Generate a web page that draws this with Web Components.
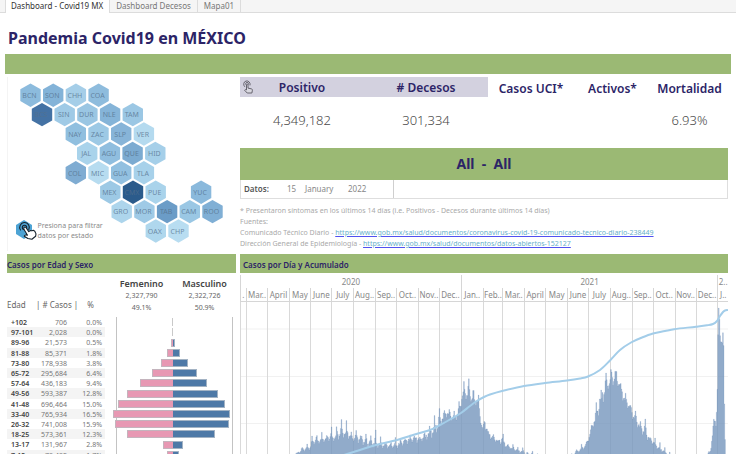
<!DOCTYPE html>
<html lang="es">
<head>
<meta charset="utf-8">
<title>Pandemia Covid19 en MÉXICO</title>
<style>
  body { margin: 0; overflow: hidden; background: #fff; font-family: "Noto Sans", "Open Sans", sans-serif; font-size: 8px; color: #666;
    --green: #9bb974; --navy: #2c2467; --line: #d6d6d6; }
</style>
</head>
<body>
<covid-dashboard></covid-dashboard>
<script>
const define = (name, html, render) => customElements.define(name, class extends HTMLElement {
  connectedCallback() {
    if (this.shadowRoot) return;
    this.attachShadow({ mode: 'open' }).innerHTML = html;
    if (render) render(this.shadowRoot, this);
  }
});

define('sheet-tabs', `
<style>
  :host { display: block; background: #f5f5f5; border-bottom: 1px solid #dcdcdc; height: 12px; padding-left: 5px; }
  nav { display: flex; height: 13px; }
  button { font: inherit; font-size: 8px; line-height: 12px; padding: 0 6px 1px; margin: 0; border: 0; border-right: 1px solid #dcdcdc; background: none; color: #777; white-space: nowrap; }
  button[aria-selected=true] { background: #fff; color: #333; padding-left: 5px; border-left: 1px solid #dcdcdc; }
</style>
<nav role="tablist">
  <button role="tab" aria-selected="true">Dashboard - Covid19 MX</button>
  <button role="tab" aria-selected="false">Dashboard Decesos</button>
  <button role="tab" aria-selected="false">Mapa01</button>
</nav>`);

define('section-band', `
<style>
  :host { display: block; background: var(--green); color: var(--navy); font-size: 8px; font-weight: 600; line-height: 21px; height: 19px; }
  h2 { font: inherit; line-height: inherit; margin: 0; }
  :host([inset]) { padding-left: 3px; }
</style>
<h2><slot></slot></h2>`);

define('state-map', `
<style>
  :host { display: block; }
  svg { display: block; width: 100%; }
  text { font-size: 7px; fill: #54708c; fill-opacity: .75; text-anchor: middle; }
  .hint { font-size: 7px; fill: #8a8a8a; fill-opacity: 1; text-anchor: start; }
</style>
<svg viewBox="5 77 231 174" role="img" aria-label="Mapa de estados">
  <path d="M7.500 77V251" stroke="#f4f4f4"/>
  <g id="cells"></g>
  <polygon points="24,220 32,225 32,234 24,239 16,234 16,225" fill="#4da3d4"/>
  <g fill="none" stroke="#16222c" stroke-width="1.100" stroke-linecap="round" stroke-linejoin="round">
    <circle cx="24.500" cy="227.500" r="2.200"/>
    <path d="M20.500 230a4.800 4.800 0 1 1 8.300-.5"/>
    <path fill="#fff" d="M24 227.500q1-1 1.900 0l2.900 4.100 1.500-1 1.700.2 1.300-.5 1.500.9 1.200 2.700-.4 2.400-3.700 2.900-4-.7-3.600-2.300q.2-1.400 1.900-1.200l1.300.2-3.300-5.500q-.8-1.300-.2-2.200z"/>
  </g>
  <text class="hint" x="37.500" y="228">Presiona para filtrar</text>
  <text class="hint" x="37.500" y="238">datos por estado</text>
</svg>`, root => {
  const rows = [
    [30.5, 'BCN #8cbbdd,SON #83b3d8,CHH #a5cee8,COA #8ebcdd'],
    [42, 'BCS #4472a4,SIN #9fcae6,DUR #9ac6e3,NLE #85b4d8,TAM #9bc7e4'],
    [75.8, 'NAY #90bfdf,ZAC #9dc9e5,SLP #87b4d8,VER #b4daef'],
    [87.2, 'JAL #a9d3eb,AGU #90bedf,QUE #7cabd1,HID #a5cfe9'],
    [75.8, 'COL #7facd2,MIC #b7dcf0,GUA #92c0e0,TLA #a7d1ea'],
    [110.3, 'MEX #9dc9e5,CMX #2b5b8b,PUE #a9d3eb,,YUC #8ab9dc'],
    [121.7, 'GRO #add5ec,MOR #9fcae6,TAB #6b9cc7,CAM #9ac7e4,ROO #80afd5'],
    [155.8, 'OAX #afd7ed,CHP #b8ddf1']];
  root.getElementById('cells').innerHTML = rows.map(([x0, list], r) => list.split(',').map((s, i) => {
    if (!s) return '';
    const [name, fill] = s.split(' '), x = x0 + i * 22.7, y = 95.2 + r * 19.4;
    return `<path fill="${fill}" d="M${x} ${y - 11.7}l10.200 5.800v11.700l-10.200 5.900l-10.200-5.900v-11.700z"/><text x="${x - 1}" y="${y + 2.8}">${name}</text>`;
  }).join('')).join('');
});

define('kpi-tile', `
<style>
  :host { display: block; text-align: center; }
  h3 { position: relative; margin: 0; font-size: 12px; line-height: 22px; height: 20px; font-weight: 600; color: var(--navy); }
  :host([active]) h3 { background: #d3d1df; }
  :host(:not([active])) h3 { line-height: 24px; }
  p { margin: 12px 0 0; font-size: 13px; line-height: 22px; font-weight: 300; height: 39px; color: #484848; }
  ::slotted(svg) { position: absolute; left: 2px; top: 3px; width: 12px; height: 14px; }
</style>
<h3><slot name="icon"></slot><slot name="label"></slot></h3><p><slot></slot></p>`);

define('source-notes', `
<style>
  :host { display: block; padding-top: 6px; font-size: 7px; line-height: 11px; color: #a9a9a9; white-space: nowrap; }
  p { margin: 0; }
  a { color: #67b0ca; text-decoration: underline #5151f0; text-underline-offset: 1px; }
</style>
<p>* Presentaron síntomas en los últimos 14 días (i.e. Positivos - Decesos durante últimos 14 días)</p>
<p>Fuentes:</p>
<p>Comunicado Técnico Diario - <a href="https://www.gob.mx/salud/documentos/coronavirus-covid-19-comunicado-tecnico-diario-238449">https://www.gob.mx/salud/documentos/coronavirus-covid-19-comunicado-tecnico-diario-238449</a></p>
<p>Dirección General de Epidemiología - <a href="https://www.gob.mx/salud/documentos/datos-abiertos-152127">https://www.gob.mx/salud/documentos/datos-abiertos-152127</a></p>`);

define('date-row', `
<style>
  :host { display: grid; grid-template-columns: 154fr 334fr; border: 1px solid #dedede; border-top: 0; height: 18px; line-height: 18px; }
  div { display: flex; border-right: 1px solid #cfcfcf; padding-left: 3px; color: #888; }
  b { width: 43px; font-weight: 600; color: #555; }
  .d { width: 18px; } .m { width: 43px; }
</style>
<div><b>Datos:</b><span class="d">15</span><span class="m">January</span><span>2022</span></div>`);

define('age-pyramid', `
<style>
  :host { display: block; }
  table { width: 100%; border-collapse: collapse; table-layout: fixed; line-height: 10px; }
  th, td { padding: 0; }
  thead th { box-sizing: border-box; height: 44px; padding-bottom: 7px; vertical-align: bottom; font-weight: 400; text-align: left; white-space: nowrap; }
  thead th.c { text-align: center; }
  thead th.sex { text-align: center; line-height: 12px; padding: 5px 0 0; vertical-align: top; font-size: 7px; }
  thead th.sex b { display: block; font-size: 9px; font-weight: 600; color: #444; }
  thead th.sex span { display: block; line-height: 11px; }
  tbody { line-height: 9px; font-size: 7px; }
  tbody th { font-weight: 600; text-align: left; padding-left: 4px; color: #444; }
  tbody td { text-align: right; color: #777; padding-right: 3px; }
  tbody td.n { padding-right: 9px; }
  tbody tr:nth-child(even) :is(th, .n, .p) { background: #f4f4f4; }
  tbody td.bar { vertical-align: middle; padding: 0; }
  .bar i { display: block; height: 8px; box-sizing: border-box; border: 1px solid #c4b4bd; width: var(--w); }
  .f { background: linear-gradient(#c3c3c3, #c3c3c3) 6px 0 / 1px 100% no-repeat; }
  .m { background: linear-gradient(#c3c3c3, #c3c3c3) 59px 0 / 1px 100% no-repeat; }
  .f i { background: #e798b3; margin-left: auto; border-right: 0; }
  .m i { background: #4e79a7; border-color: #a3b3c4; border-left: 0; }
  .f.none i { background: #c9c9c9; border: 0; }
  .m.none i { visibility: hidden; }
</style>
<table>
  <colgroup><col style="width:29px"><col style="width:40px"><col style="width:29px"><col style="width:5px"><col><col></colgroup>
  <thead><tr><th>Edad</th><th class="c">| # Casos |</th><th class="c">%</th><td></td><th class="sex"><b>Femenino</b>2,327,790<span>49.1%</span></th><th class="sex"><b>Masculino</b>2,322,726<span>50.9%</span></th></tr></thead>
  <tbody></tbody>
</table>`, root => {
  const data = [['+102', '706', '0.0', 1, 1], ['97-101', '2,028', '0.0', 1, 1], ['89-96', '21,573', '0.5', 2, 2], ['81-88', '85,371', '1.8', 6, 7],
    ['73-80', '178,938', '3.8', 12, 15], ['65-72', '295,684', '6.4', 21, 24], ['57-64', '436,183', '9.4', 33, 34], ['49-56', '593,387', '12.8', 46, 45],
    ['41-48', '696,464', '15.0', 55, 52], ['33-40', '765,934', '16.5', 60, 57], ['26-32', '741,008', '15.9', 58, 56], ['18-25', '573,361', '12.3', 46, 42],
    ['13-17', '131,967', '2.8', 10, 10], ['7-12', '79,492', '1.7', 6, 6]];
  root.querySelector('tbody').innerHTML = data.map(([a, n, p, f, m], i) => {
    const none = f < 2 ? ' none' : '';
    return `<tr style="height:${i % 5 === 2 ? 11 : 10}px"><th scope="row">${a}</th><td class="n">${n}</td><td class="p">${p}%</td><td></td><td class="bar f${none}"><i style="--w:${f}px"></i></td><td class="bar m${none}"><i style="--w:${m}px"></i></td></tr>`;
  }).join('');
});

define('daily-chart', `
<style>
  :host { display: block; padding-top: 2px; color: #888; }
  .years, .months { display: grid; text-align: center; }
  .years span, .months span { border-left: 1px solid var(--line); overflow: hidden; min-width: 0; white-space: nowrap; font-size: 8px; line-height: 14px; height: 13px; }
  .months { border-bottom: 1px solid var(--line); }
  svg { display: block; width: 100%; height: 154px; }
</style>
<div class="years"></div><div class="months"></div>
<svg viewBox="240 302 488 154" preserveAspectRatio="none" role="img" aria-label="Casos por día y acumulado"></svg>`, root => {
  const days = [8, 31, 30, 31, 30, 31, 31, 30, 31, 30, 31, 31, 28, 31, 30, 31, 30, 31, 31, 30, 31, 30, 31, 15];
  const names = ['.', 'Mar..', 'April', 'May', 'June', 'July', 'Aug..', 'Sep..', 'Oct..', 'Nov..', 'Dec..', 'Jan..', 'Feb..', 'Mar..', 'April', 'May', 'June', 'July', 'Aug..', 'Sep..', 'Oct..', 'Nov..', 'Dec..', 'J..'];
  const total = days.reduce((a, b) => a + b), unit = 488 / total;
  const months = root.querySelector('.months'), years = root.querySelector('.years');
  months.style.gridTemplateColumns = days.map(d => d + 'fr').join(' ');
  months.innerHTML = names.map(n => `<span>${n}</span>`).join('');
  years.style.gridTemplateColumns = '314fr 365fr 15fr';
  years.innerHTML = '<span>2020</span><span>2021</span><span>2..</span>';
  let sum = 0, grid = '';
  for (const d of days) { const x = Math.round(240 + sum * unit) + .5; grid += `M${x} 302V456`; sum += d; }

  /* x, typical level, weekly peak level */
  const env = [[290,460,460],[295,455,452],[303,451,445],[310,449,444],[312,444,434],[320,443,433],[325,441,431],[332,440,427],[339,438,423],[346,436,420],[350,439,431],[359,442,430],[367,446,434],[375,446,432],[385,448,440],[397,447,438],[405,444,434],[410,441,430],[418,442,431],[425,439,430],[432,436,417],[437,430,412],[441,423,406],[447,415,406],[454,422,410],[459,414,400],[461,404,385],[463,396,375],[468,398,381],[472,402,385],[476,404,384],[479,416,395],[481,425,420],[483,434,425],[484,424,410],[488,437,427],[493,440,431],[498,443,436],[502,444,429],[506,447,442],[518,452,447],[525,455,448],[535,456,451],[540,459,456],[565,460,459],[575,454,450],[582,450,444],[587,445,438],[591,430,420],[595,422,405],[600,407,379],[606,391,368],[609,386,380],[611,382,364],[614,384,366],[616,381,364],[620,390,373],[625,407,388],[630,408,402],[632,418,402],[638,427,416],[645,437,420],[650,441,434],[655,447,439],[665,454,449],[675,459,457],[704,460,459],[710,453,447],[713,430,419],[716,424,405],[717,395,360],[718,336,309],[719,325,309],[720,340,334],[722,345,336],[723,330,324],[724,410,400],[725,456,450],[728,460,460]];
  const week = [.15, .3, .55, .95, .5, .3, -.1];
  let d = 'M290 460';
  for (let i = 0, x = 290, k = 0; x < 727; i++, x = 290 + i * .7) {
    while (env[k + 1][0] < x) k++;
    const [xa, a, pa] = env[k], [xb, b, pb] = env[k + 1], t = (x - xa) / (xb - xa);
    const h = Math.abs(Math.sin(i * 12.9898) * 43758.5453) % 1;
    const w = week[i % 7] * (.35 + .9 * h);
    const y = (a + (b - a) * t) * (1 - w) + (pa + (pb - pa) * t) * w;
    d += `V${y.toFixed(1)}h.7`;
  }
  d += 'V460z';
  const p = [[340,456.5],[344,455],[355,451.5],[376,445],[397,440],[418,433.5],[430,430],[440,425],[450,419.5],[461,413],[470,406],[476,401.5],[484,397],[490,394.5],[502,391],[524,386],[545,383],[567,380.5],[580,378.5],[588,376.5],[600,370],[610,360.5],[620,350],[631,342.5],[642,337.5],[653,333.5],[665,331],[674,329.2],[696,326.7],[707,325.3],[713,324],[717,321],[720,316],[723,312],[725,310.5],[728,310]];
  let line = `M${p[0]}`;
  for (let i = 0; i < p.length - 1; i++) {
    const a = p[i - 1] || p[i], b = p[i], c = p[i + 1], e = p[i + 2] || c, w = c[0] - b[0];
    const s1 = (c[1] - a[1]) / (c[0] - a[0]), s2 = (e[1] - b[1]) / (e[0] - b[0]);
    line += `C${b[0] + w / 3} ${b[1] + s1 * w / 3} ${c[0] - w / 3} ${c[1] - s2 * w / 3} ${c[0]} ${c[1]}`;
  }
  root.querySelector('svg').innerHTML = `<path d="M240 329H728M240 376.500H728M240 423.500H728" stroke="#f1f1f1"/><path d="${grid}" stroke="#d9d9d9"/>
    <path d="${d}" fill="#7696bd" fill-opacity=".8" stroke="#6b8db8" stroke-opacity=".4" stroke-width=".5"/><path d="${line}" fill="none" stroke="#a3cde9" stroke-width="2"/>`;
});

define('covid-dashboard', `
<style>
  :host { display: block; }
  h1 { margin: 0; padding: 13px 8px 4px; font-size: 16px; line-height: 24px; font-weight: 700; color: var(--navy); }
  .rule { height: 20px; margin: 0 5px; background: var(--green); }
  main { display: grid; grid-template-columns: 231fr 488fr; column-gap: 4px; padding: 3px 8px 0 5px; }
  .upper { height: 177px; }
  .left { padding-left: 2px; }
  .kpis { display: grid; grid-template-columns: 124fr 124fr 86fr 77fr 77fr; }
  .all { background: var(--green); color: var(--navy); text-align: center; font-size: 14px; font-weight: 700; line-height: 32px; white-space: pre; }
  main > * { min-width: 0; }
</style>
<sheet-tabs></sheet-tabs>
<h1>Pandemia Covid19 en MÉXICO</h1>
<div class="rule"></div>
<main>
  <div class="upper"><state-map></state-map></div>
  <div class="upper">
    <div class="kpis">
      <kpi-tile active>
        <svg slot="icon" viewBox="0 0 12 14" fill="none" stroke="#66646e" stroke-linecap="round" stroke-linejoin="round"><path d="M2.500 6.500a3.300 3.300 0 1 1 5.600-1.500M4 4.700a1.400 1.400 0 1 1 2.300-.2"/><path fill="#d9d8e0" d="M4.500 9.500V4.700q.8-1 1.500 0v3.400l3.500.8q1 .3.900 1.300l-.5 2.800H5.200L2.600 10.200q.6-1 1.900-.7z"/></svg>
        <span slot="label">Positivo</span>4,349,182</kpi-tile>
      <kpi-tile active><span slot="label"># Decesos</span>301,334</kpi-tile>
      <kpi-tile><span slot="label">Casos UCI*</span></kpi-tile>
      <kpi-tile><span slot="label">Activos*</span></kpi-tile>
      <kpi-tile><span slot="label">Mortalidad</span>6.93%</kpi-tile>
    </div>
    <div class="all">All  -  All</div>
    <date-row></date-row>
    <source-notes></source-notes>
  </div>
  <div class="left"><section-band>Casos por Edad y Sexo</section-band><age-pyramid></age-pyramid></div>
  <div><section-band inset>Casos por Día y Acumulado</section-band><daily-chart></daily-chart></div>
</main>`);
</script>
</body>
</html>
